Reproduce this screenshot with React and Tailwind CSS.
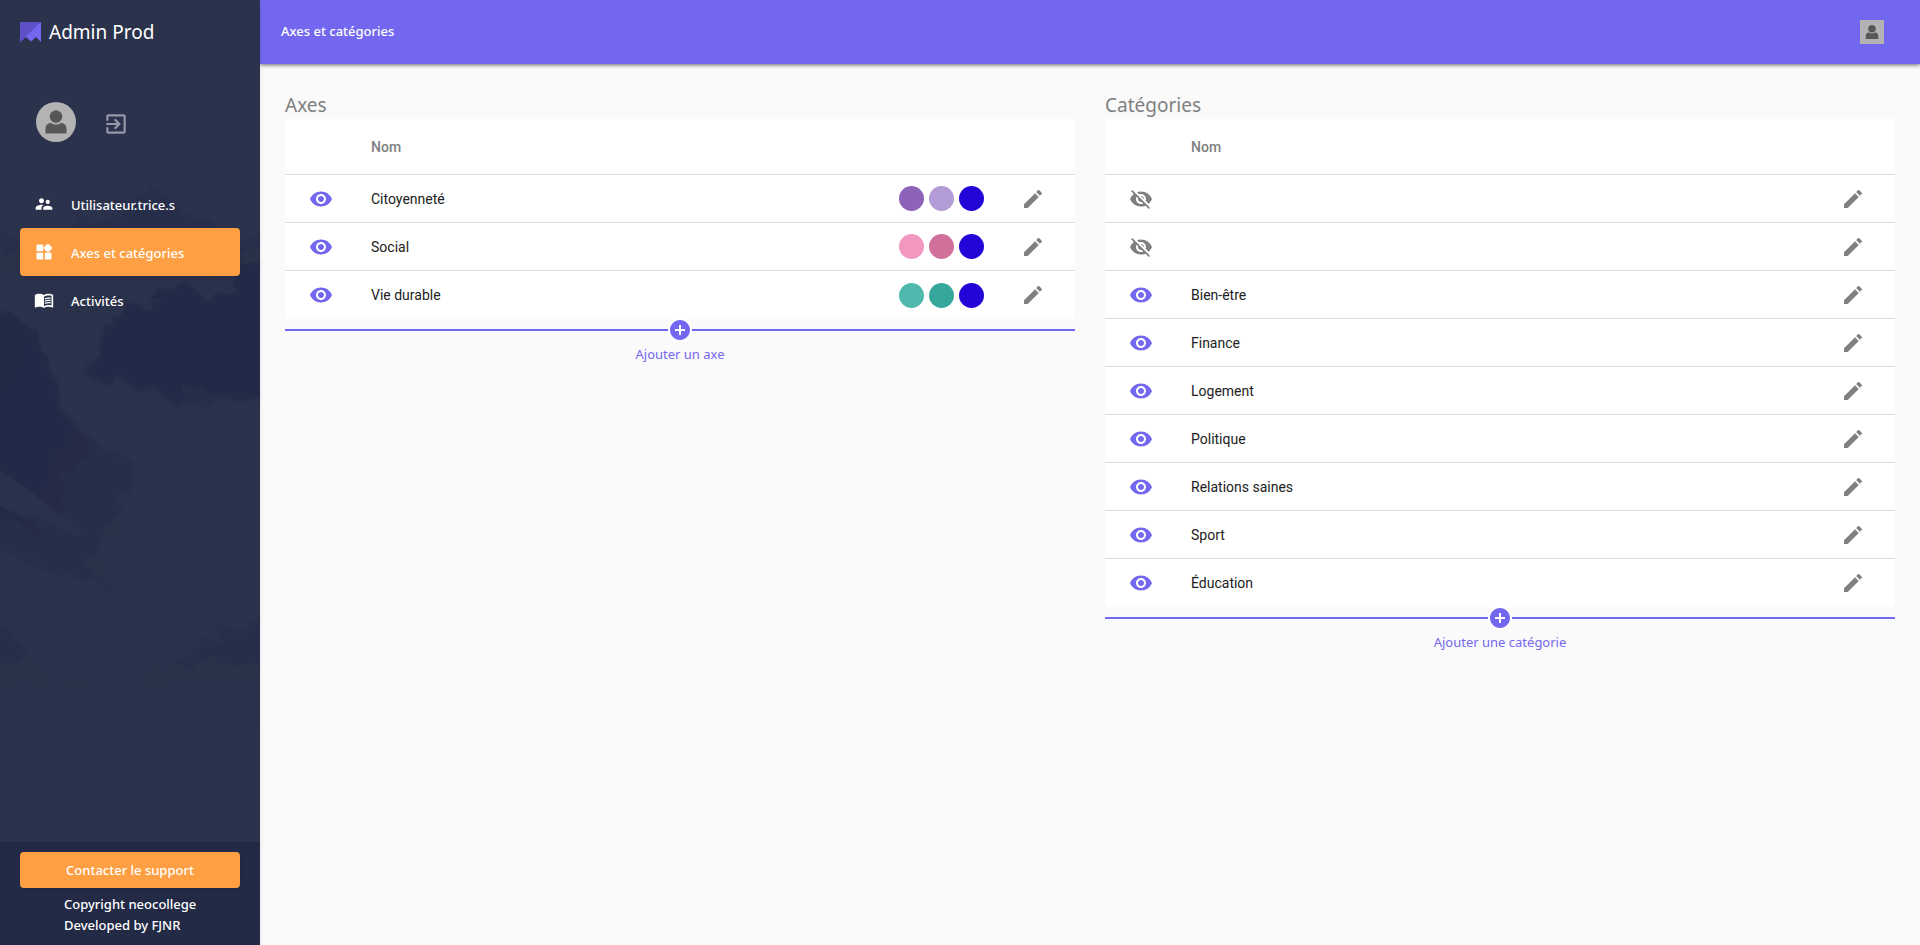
import React from "react";
import {
  MdVisibility,
  MdVisibilityOff,
  MdEdit,
  MdExitToApp,
  MdSupervisorAccount,
  MdWidgets,
  MdMenuBook,
  MdAddCircle,
} from "react-icons/md";

const navItems = [
  { label: "Utilisateur.trice.s", Icon: MdSupervisorAccount },
  { label: "Axes et catégories", Icon: MdWidgets, active: true },
  { label: "Activités", Icon: MdMenuBook },
];

const axes = [
  { name: "Citoyenneté", visible: true, colors: ["#8d63b9", "#b39bd6", "#2305d8"] },
  { name: "Social", visible: true, colors: ["#f298c0", "#d0719c", "#2305d8"] },
  { name: "Vie durable", visible: true, colors: ["#51b8ae", "#36a79b", "#2305d8"] },
];

const categories = [
  { name: "", visible: false },
  { name: "", visible: false },
  { name: "Bien-être", visible: true },
  { name: "Finance", visible: true },
  { name: "Logement", visible: true },
  { name: "Politique", visible: true },
  { name: "Relations saines", visible: true },
  { name: "Sport", visible: true },
  { name: "Éducation", visible: true },
];

const Avatar = ({ className }) => (
  <svg viewBox="0 0 40 40" className={className} aria-hidden="true">
    <rect width="40" height="40" fill="#b3b3b3" />
    <circle cx="20" cy="14.500" r="6.300" fill="#575757" />
    <path
      d="M9.500 31.500V27c0-3.500 2-6 5.500-6 1.500 1 3 1.500 5 1.500s3.500-.500 5-1.500c3.500 0 5.500 2.500 5.500 6v4.500z"
      fill="#575757"
    />
  </svg>
);

const Logo = () => (
  <svg viewBox="0 0 21 20" className="h-5 w-[21px]" aria-hidden="true">
    <path d="M0 0h21v20l-5-5-5 4.500L6 15l-6 5z" fill="#7367f0" />
    <path d="M0 0h21L0 20z" fill="#5e50c9" />
  </svg>
);

// Faint mountain scenery behind the menu
const Scenery = () => (
  <svg
    viewBox="0 0 260 945"
    preserveAspectRatio="xMidYMid slice"
    className="absolute inset-0 h-full w-full"
    aria-hidden="true"
  >
    <defs>
      <linearGradient id="ridge" x1="0" y1="0" x2="0" y2="1">
        <stop offset="0" stopColor="#272e49" />
        <stop offset="1" stopColor="#2b324c" />
      </linearGradient>
      <linearGradient id="cliff" x1="0" y1="0" x2="1" y2="1">
        <stop offset="0" stopColor="#222945" />
        <stop offset="0.5" stopColor="#242b46" />
        <stop offset="1" stopColor="#2b324c" />
      </linearGradient>
      <filter id="rock" x="-10%" y="-10%" width="120%" height="120%">
        <feTurbulence type="fractalNoise" baseFrequency="0.06" numOctaves="4" seed="3" />
        <feDisplacementMap in="SourceGraphic" scale="22" />
        <feGaussianBlur stdDeviation="1.5" />
      </filter>
    </defs>
    <g filter="url(#rock)">
      <path
        d="M-20 232l42 8 26 14 20-22 13-18 8 14 34-16 16-16 12-9 12 6 20 18 28 12 18 20 51-6v70l-110 60-80-14L-20 370z"
        fill="url(#ridge)"
      />
      <path
        d="M280 245l-42 25-10 24-24 4-16-16-16 2-12 16-34 8-18 16-6 24-20 26 14 8 24-2 22 12 18 2 14 10 28-2 18-4 60 6z"
        fill="#242b47"
      />
      <path
        d="M-20 314l30-3 14 12 14 6 6 20 12 34 6 26 14 18 26 20 30 12 4 20-20 26 4 30-20 20 20 26-60-12-44-40-36-18z"
        fill="url(#cliff)"
      />
      <path d="M-20 462l30 14 30 24 48 34-30-4L-20 495z" fill="#29304b" />
      <path d="M-20 512l40 12 30 18 60 42-40-6-40-14-50-20z" fill="#272e49" />
      <path
        d="M-20 620l26 8 24 28 16 22 36 0 40 6 40-16 36-26 40-16 50-4v110l-90 10-90 8-128-10z"
        fill="url(#ridge)"
      />
      <path d="M184 386l18 2 22 4 6 8-22 10-22-4z" fill="#272e4a" />
    </g>
  </svg>
);

const Sidebar = () => (
  <aside className="relative z-10 w-[260px] shrink-0 bg-[#2b324c] text-white shadow-md">
    <Scenery />
    <div className="relative flex min-h-screen flex-col">
      <div className="flex h-16 items-center gap-2 px-5">
        <Logo />
        <span className="text-[19px]">Admin Prod</span>
      </div>

      <div className="mt-[38px] flex items-center gap-[27px] px-9">
        <Avatar className="h-10 w-10 rounded-full" />
        <button type="button" aria-label="Se déconnecter" className="pt-1 text-[#9598a5]">
          <MdExitToApp className="h-6.5 w-6.5" />
        </button>
      </div>

      <nav className="mt-[38px] px-5">
        {navItems.map(({ label, Icon, active }) => (
          <a
            key={label}
            href="#"
            className={`flex h-12 items-center gap-[17px] rounded px-3.5 font-medium ${
              active ? "bg-[#ff9f43] shadow-sm" : ""
            }`}
          >
            <Icon className="h-5 w-5" />
            <span className="pt-1">{label}</span>
          </a>
        ))}
      </nav>

      <div className="mt-auto bg-[#232a46] px-5 pt-2.5 pb-[9px]">
        <button
          type="button"
          className="h-9 w-full rounded bg-[#ff9f43] pt-0.5 font-medium shadow-sm"
        >
          Contacter le support
        </button>
        <p className="mt-1.5 pl-11 font-medium leading-[21px]">
          Copyright neocollege
          <br />
          Developed by FJNR
        </p>
      </div>
    </div>
  </aside>
);

const DataTable = ({ title, rows, addLabel }) => (
  <section className="min-w-0 flex-1">
    <h2 className="text-[19px] leading-7 text-[#808080]">{title}</h2>
    <table className="w-full border-separate border-spacing-0 bg-white text-left font-[Roboto,sans-serif] text-sm text-[#212121]">
      <thead>
        <tr className="h-14 text-[#808080] *:border-b *:border-[#dedede]">
          <th className="w-[86px]" />
          <th className="font-medium">Nom</th>
          <th />
          <th className="w-[91px]" />
        </tr>
      </thead>
      <tbody>
        {rows.map((row, index) => (
          <tr key={index} className="h-12 *:border-b *:border-[#dedede] last:*:border-b-0">
            <td className="pl-6">
              <button type="button" aria-label="Visibilité" className="block">
                {row.visible ? (
                  <MdVisibility className="h-6 w-6 text-[#7367f0]" />
                ) : (
                  <MdVisibilityOff className="h-6 w-6 text-[#808080]" />
                )}
              </button>
            </td>
            <td>{row.name}</td>
            <td>
              <div className="flex justify-end gap-[5px]">
                {row.colors?.map((color) => (
                  <span
                    key={color}
                    className="h-[25px] w-[25px] rounded-full"
                    style={{ backgroundColor: color }}
                  />
                ))}
              </div>
            </td>
            <td className="pr-[30px]">
              <button type="button" aria-label="Modifier" className="ml-auto block">
                <MdEdit className="h-6 w-6 text-[#808080]" />
              </button>
            </td>
          </tr>
        ))}
      </tbody>
    </table>
    <button type="button" className="-mt-px block w-full text-[#7367f0]">
      <span className="flex items-center">
        <span className="h-0.5 flex-1 bg-[#7367f0]" />
        <MdAddCircle className="h-6 w-6 rounded-full bg-white" />
        <span className="h-0.5 flex-1 bg-[#7367f0]" />
      </span>
      <span className="block leading-6">{addLabel}</span>
    </button>
  </section>
);

const App = () => (
  <div className="flex min-h-screen bg-[#fafafa] font-['Noto_Sans','Open_Sans',sans-serif] text-[13px]">
    <Sidebar />
    <div className="flex min-w-0 flex-1 flex-col">
      <header className="flex h-16 items-center justify-between bg-[#7367f0] pr-9 pl-[21px] text-white shadow-[0_1px_4px_rgba(0,0,0,0.6)]">
        <h1 className="font-medium">Axes et catégories</h1>
        <button type="button" aria-label="Mon compte">
          <Avatar className="h-6 w-6" />
        </button>
      </header>
      <main className="flex gap-[30px] px-[25px] pt-[27px] pb-6">
        <DataTable title="Axes" rows={axes} addLabel="Ajouter un axe" />
        <DataTable title="Catégories" rows={categories} addLabel="Ajouter une catégorie" />
      </main>
    </div>
  </div>
);

export default App;
